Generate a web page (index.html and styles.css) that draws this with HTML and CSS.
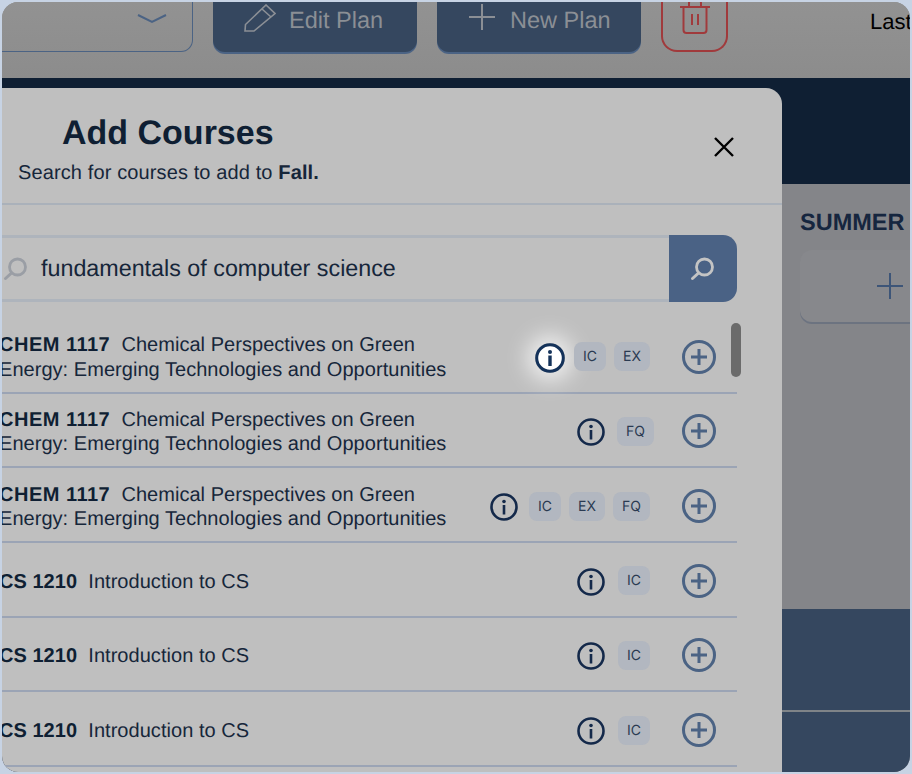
FILE: index.html
```html
<!DOCTYPE html>
<html lang="en">
<head>
<meta charset="utf-8">
<title>Add Courses</title>
<link rel="stylesheet" href="styles.css">
</head>
<body>
<div class="frame">
  <div class="app">
    <header class="topbar">
      <div class="select">
        <svg class="chevron" width="30" height="12" viewBox="0 0 30 12"><path d="M1 2 L15 9 L29 2" fill="none" stroke="#4b6384" stroke-width="2"/></svg>
      </div>
      <button class="plan-btn">
        <svg class="edit-icon" width="32" height="28" viewBox="0 0 32 28"><path d="M1 27 L1.500 20.500 L22 1 L31 9.500 L10 27 Z M18 5 L27 13" fill="none" stroke="#8b8f95" stroke-width="1.600"/></svg>
        <span>Edit Plan</span>
      </button>
      <button class="plan-btn">
        <svg class="new-icon" width="28" height="28" viewBox="0 0 28 28"><path d="M14 1 V27 M1 14 H27" fill="none" stroke="#8b8f95" stroke-width="2"/></svg>
        <span>New Plan</span>
      </button>
      <button class="trash-btn">
        <svg width="32" height="36" viewBox="0 0 32 36"><path d="M1 8 H31 M4.500 8 V31 Q4.500 34 7.500 34 H24.500 Q27.500 34 27.500 31 V8 M10 8 V4 Q10 1.500 12.500 1.500 H19.500 Q22 1.500 22 4 V8 M13 15 V26 M19 15 V26" fill="none" stroke="#a03a3c" stroke-width="2"/></svg>
      </button>
      <span class="last">Last</span>
    </header>
    <div class="navy"></div>
    <section class="board">
      <div class="column">
        <h2 class="col-title">SUMMER</h2>
        <div class="add-card"><svg width="28" height="28" viewBox="0 0 28 28"><path d="M14 1 V27 M1 14 H27" fill="none" stroke="#3d5578" stroke-width="2"/></svg></div>
      </div>
    </section>
    <footer class="dark">
      <div class="dark-top"></div>
      <div class="dark-bottom"></div>
    </footer>
  </div>

  <div class="modal">
    <div class="modal-head">
      <h1 class="title">Add Courses</h1>
      <p class="sub">Search for courses to add to <b>Fall.</b></p>
      <svg class="close" width="22" height="22" viewBox="0 0 22 22"><path d="M2 2 L20 20 M20 2 L2 20" fill="none" stroke="#000" stroke-width="2.400"/></svg>
    </div>
    <div class="modal-body">
      <div class="search">
        <div class="search-field">
          <svg class="lens" width="26" height="24" viewBox="0 0 26 24"><circle cx="15.500" cy="10" r="8" fill="none" stroke="#9a9ea5" stroke-width="2.800"/><path d="M9.500 16 L3.500 21.500" stroke="#9a9ea5" stroke-width="3" stroke-linecap="round"/></svg>
          <span>fundamentals of computer science</span>
        </div>
        <button class="search-btn"><svg width="26" height="24" viewBox="0 0 26 24"><circle cx="14.500" cy="10" r="8" fill="none" stroke="#c4c4c4" stroke-width="2.800"/><path d="M8.500 16 L2.500 21.500" stroke="#c4c4c4" stroke-width="3" stroke-linecap="round"/></svg></button>
      </div>
      <ul class="list">
        <li class="row">
          <p class="course"><b class="code-long">CHEM 1117</b>&nbsp; Chemical Perspectives on Green<br>Energy: Emerging Technologies and Opportunities</p>
          <span class="info-wrap glow"><svg width="30" height="30" viewBox="0 0 30 30"><circle cx="15" cy="15" r="13.300" fill="#fff" stroke="#14325a" stroke-width="3"/><circle cx="15" cy="9" r="2" fill="#14325a"/><rect x="13.300" y="12.500" width="3.400" height="10.500" fill="#14325a"/></svg></span>
          <span class="chip">IC</span><span class="chip">EX</span>
          <svg class="plus" width="34" height="34" viewBox="0 0 34 34"><circle cx="17" cy="17" r="15.500" fill="none" stroke="#4b6384" stroke-width="3"/><path d="M17 9 V25 M9 17 H25" stroke="#4b6384" stroke-width="3"/></svg>
        </li>
        <li class="row">
          <p class="course"><b class="code-long">CHEM 1117</b>&nbsp; Chemical Perspectives on Green<br>Energy: Emerging Technologies and Opportunities</p>
          <span class="info-wrap info-mid"><svg width="28" height="28" viewBox="0 0 28 28"><circle cx="14" cy="14" r="12.500" fill="none" stroke="#14294a" stroke-width="2.600"/><circle cx="14" cy="8.500" r="1.800" fill="#14294a"/><rect x="12.700" y="12" width="2.600" height="9.500" fill="#14294a"/></svg></span>
          <span class="chip chip-wide">FQ</span>
          <svg class="plus" width="34" height="34" viewBox="0 0 34 34"><circle cx="17" cy="17" r="15.500" fill="none" stroke="#4b6384" stroke-width="3"/><path d="M17 9 V25 M9 17 H25" stroke="#4b6384" stroke-width="3"/></svg>
        </li>
        <li class="row">
          <p class="course"><b class="code-long">CHEM 1117</b>&nbsp; Chemical Perspectives on Green<br>Energy: Emerging Technologies and Opportunities</p>
          <span class="info-wrap"><svg width="28" height="28" viewBox="0 0 28 28"><circle cx="14" cy="14" r="12.500" fill="none" stroke="#14294a" stroke-width="2.600"/><circle cx="14" cy="8.500" r="1.800" fill="#14294a"/><rect x="12.700" y="12" width="2.600" height="9.500" fill="#14294a"/></svg></span>
          <span class="chip">IC</span><span class="chip">EX</span><span class="chip">FQ</span>
          <svg class="plus" width="34" height="34" viewBox="0 0 34 34"><circle cx="17" cy="17" r="15.500" fill="none" stroke="#4b6384" stroke-width="3"/><path d="M17 9 V25 M9 17 H25" stroke="#4b6384" stroke-width="3"/></svg>
        </li>
        <li class="row">
          <p class="course"><b>CS 1210</b>&nbsp; Introduction to CS</p>
          <span class="info-wrap info-loose"><svg width="28" height="28" viewBox="0 0 28 28"><circle cx="14" cy="14" r="12.500" fill="none" stroke="#14294a" stroke-width="2.600"/><circle cx="14" cy="8.500" r="1.800" fill="#14294a"/><rect x="12.700" y="12" width="2.600" height="9.500" fill="#14294a"/></svg></span>
          <span class="chip">IC</span>
          <svg class="plus" width="34" height="34" viewBox="0 0 34 34"><circle cx="17" cy="17" r="15.500" fill="none" stroke="#4b6384" stroke-width="3"/><path d="M17 9 V25 M9 17 H25" stroke="#4b6384" stroke-width="3"/></svg>
        </li>
        <li class="row">
          <p class="course"><b>CS 1210</b>&nbsp; Introduction to CS</p>
          <span class="info-wrap info-loose"><svg width="28" height="28" viewBox="0 0 28 28"><circle cx="14" cy="14" r="12.500" fill="none" stroke="#14294a" stroke-width="2.600"/><circle cx="14" cy="8.500" r="1.800" fill="#14294a"/><rect x="12.700" y="12" width="2.600" height="9.500" fill="#14294a"/></svg></span>
          <span class="chip">IC</span>
          <svg class="plus" width="34" height="34" viewBox="0 0 34 34"><circle cx="17" cy="17" r="15.500" fill="none" stroke="#4b6384" stroke-width="3"/><path d="M17 9 V25 M9 17 H25" stroke="#4b6384" stroke-width="3"/></svg>
        </li>
        <li class="row">
          <p class="course"><b>CS 1210</b>&nbsp; Introduction to CS</p>
          <span class="info-wrap info-loose"><svg width="28" height="28" viewBox="0 0 28 28"><circle cx="14" cy="14" r="12.500" fill="none" stroke="#14294a" stroke-width="2.600"/><circle cx="14" cy="8.500" r="1.800" fill="#14294a"/><rect x="12.700" y="12" width="2.600" height="9.500" fill="#14294a"/></svg></span>
          <span class="chip">IC</span>
          <svg class="plus" width="34" height="34" viewBox="0 0 34 34"><circle cx="17" cy="17" r="15.500" fill="none" stroke="#4b6384" stroke-width="3"/><path d="M17 9 V25 M9 17 H25" stroke="#4b6384" stroke-width="3"/></svg>
        </li>
      </ul>
      <div class="scrollbar"></div>
    </div>
  </div>
</div>
</body>
</html>
```

FILE: styles.css
```css
* { box-sizing: border-box; }
html, body { margin: 0; padding: 0; height: 100%; background: #c7d3e4; }
body { font-family: "Liberation Sans", Arial, sans-serif; overflow: hidden; text-rendering: geometricPrecision; }
.frame { position: relative; width: 912px; height: 774px; padding: 2px; }
.app { display: flex; flex-direction: column; width: 908px; height: 770px; border-radius: 16px; overflow: hidden; background: #8f8f8f; }
.topbar { display: flex; align-items: flex-end; gap: 20px; height: 76px; flex: none; padding-bottom: 26px; overflow: hidden; background: linear-gradient(#929292, #8c8c8c); position: relative; }
.select { flex: none; width: 191px; height: 70px; border: 1px solid #4b6384; border-left: 0; border-radius: 0 0 12px 0; display: flex; justify-content: flex-end; align-items: flex-end; padding: 0 25px 26px 0; }
.plan-btn { flex: none; width: 204px; height: 70px; border: 0; border-radius: 0 0 12px 12px; background: #35475f; box-shadow: 0 2px 0 #4b6384; color: #8b8f95; font: 23.500px/27px "Liberation Sans", Arial, sans-serif; text-rendering: geometricPrecision; display: flex; align-items: flex-end; padding: 0 0 18px 31px; }
.edit-icon { margin: 0 13px 2px 0; }
.new-icon { margin: 0 14px 3px 0; }
.trash-btn { flex: none; width: 67px; height: 70px; border: 2px solid #a03a3c; border-top: 0; border-radius: 0 0 16px 16px; background: none; display: flex; align-items: flex-end; justify-content: center; padding: 0 0 15px; }
.last { position: absolute; left: 868px; top: 7px; font-size: 22px; color: #000; }
.navy { flex: none; height: 106px; background: #0f1f33; }
.board { flex: 1; background: #848589; padding: 25px 0 0 798px; overflow: hidden; }
.column { width: 200px; }
.col-title { margin: 0; font-size: 23.500px; line-height: 26px; font-weight: 700; color: #16263f; white-space: nowrap; }
.add-card { margin-top: 15px; height: 72px; width: 200px; border-radius: 12px; background: #87888c; box-shadow: 0 2px 0 #6c7380; display: flex; align-items: center; padding-left: 76px; }
.dark { flex: none; height: 163px; background: #35475f; display: flex; flex-direction: column; }
.dark-top { height: 103px; border-bottom: 2px solid #7f8488; }
.dark-bottom { flex: 1; }

.modal { position: absolute; left: 2px; top: 88px; width: 780px; height: 684px; background: #bfbfbf; border-radius: 0 16px 0 16px; overflow: hidden; display: flex; flex-direction: column; }
.modal-head { position: relative; height: 117px; flex: none; border-bottom: 2px solid #aab1ba; padding: 25px 0 0 16px; }
.title { margin: 0 0 0 44px; font-size: 34px; line-height: 40px; font-weight: 700; color: #0f1f33; }
.sub { margin: 8px 0 0; font-size: 20px; line-height: 24px; letter-spacing: .12px; color: #16263a; }
.close { position: absolute; left: 711px; top: 48px; }
.modal-body { position: relative; flex: 1; }
.search { display: flex; width: 735px; height: 67px; margin-top: 30px; }
.search-field { flex: 1; display: flex; align-items: center; gap: 13px; border-top: 3px solid #aeb4bc; border-bottom: 3px solid #aeb4bc; font-size: 23.300px; color: #16263a; }
.search-btn { flex: none; width: 68px; border: 0; padding: 0; background: #4a6285; border-radius: 0 14px 14px 0; display: flex; align-items: center; justify-content: center; }
.list { list-style: none; margin: 17px 0 0; padding: 0; width: 735px; }
.row { display: flex; align-items: center; justify-content: flex-end; gap: 8px; height: 74.670px; border-bottom: 2px solid #9ba4b5; padding: 3px 21px 0 0; }
.course { flex: 1; margin: 2px 0 0 -3px; font-size: 20px; line-height: 24.500px; letter-spacing: .04px; color: #16263a; white-space: nowrap; }
.course b { color: #0f1f33; }
.course .code-long { letter-spacing: .5px; }
.chip { flex: none; height: 29px; padding: 0 9px; border-radius: 8px; background: #b2b7c0; font: 14px/29px Inter, "Liberation Sans", sans-serif; color: #2a3a52; }
.chip-wide { margin-right: -4px; }
.info-wrap { flex: none; display: flex; margin: 2px 3px 0 0; border-radius: 50%; }
.info-mid { margin-right: 4px; }
.info-loose { margin-right: 5px; }
.glow { margin: 3px 1px 0 0; box-shadow: 0 0 22px 8px rgba(255,255,255,.75); }
.plus { flex: none; margin-left: 24px; }
.scrollbar { position: absolute; left: 729px; top: 118px; width: 10px; height: 54px; border-radius: 5px; background: #6b6b6b; }
```
